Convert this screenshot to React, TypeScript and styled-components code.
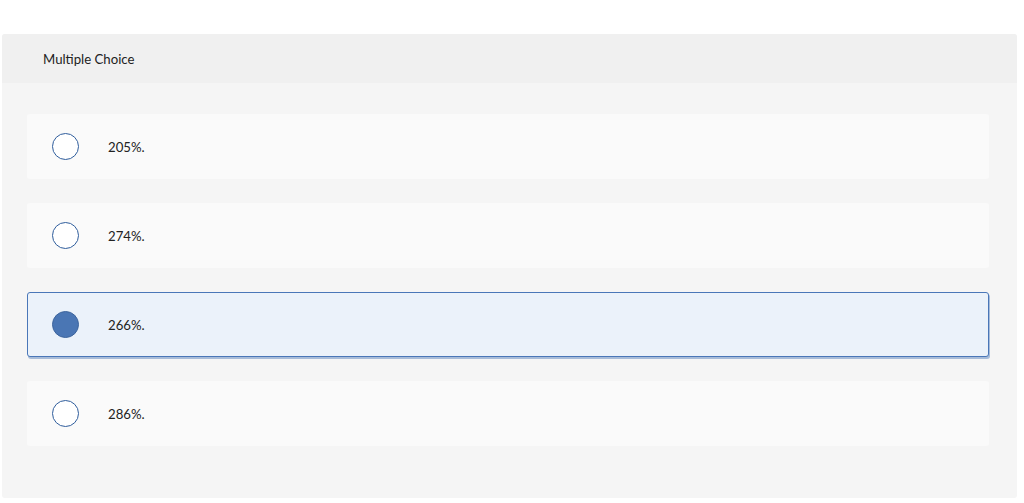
import React, { useState } from 'react';
import styled, { createGlobalStyle } from 'styled-components';

const GlobalStyle = createGlobalStyle`
  html, body {
    margin: 0;
    padding: 0;
    background: #ffffff;
    font-family: Lato, 'Open Sans', 'Liberation Sans', sans-serif;
    color: #222222;
  }
`;

const options = ['205%.', '274%.', '266%.', '286%.'];

export default function App() {
  const [selected, setSelected] = useState(2);
  return (
    <>
      <GlobalStyle />
      <Page>
        <Card>
          <Header>Multiple Choice</Header>
          <Body>
            {options.map((text, i) => (
              <Option key={text} $active={i === selected} onClick={() => setSelected(i)}>
                <Radio $active={i === selected} />
                <Label>{text}</Label>
              </Option>
            ))}
          </Body>
        </Card>
      </Page>
    </>
  );
}

const Page = styled.div`
  padding: 34px 0 0 2px;
`;

const Card = styled.div`
  width: 1015px;
  height: 464px;
  background: #f5f5f5;
  border-radius: 3px;
  overflow: hidden;
`;

const Header = styled.div`
  height: 49px;
  background: #f0f0f0;
  display: flex;
  align-items: center;
  padding-left: 41px;
  font-size: 13.2px;
  color: #222;
`;

const Body = styled.div`
  display: flex;
  flex-direction: column;
  gap: 24px;
  padding: 31px 28px 0 25px;
`;

const Option = styled.div<{ $active: boolean }>`
  height: 65px;
  box-sizing: border-box;
  display: flex;
  align-items: center;
  padding-left: 24px;
  border-radius: 3px;
  cursor: pointer;
  background: ${(p) => (p.$active ? '#ebf2fa' : '#fafafa')};
  border: 1px solid ${(p) => (p.$active ? '#4a77b8' : 'transparent')};
  box-shadow: ${(p) => (p.$active ? '1px 2px 0 rgba(74, 119, 184, 0.45)' : 'none')};
`;

const Radio = styled.span<{ $active: boolean }>`
  width: 27px;
  height: 27px;
  box-sizing: border-box;
  border-radius: 50%;
  border: 1px solid ${(p) => (p.$active ? '#3d659d' : '#2f5d9c')};
  background: ${(p) => (p.$active ? '#4a76b4' : '#ffffff')};
  flex-shrink: 0;
`;

const Label = styled.span`
  margin-left: 29px;
  font-size: 13.2px;
  color: #222;
`;
